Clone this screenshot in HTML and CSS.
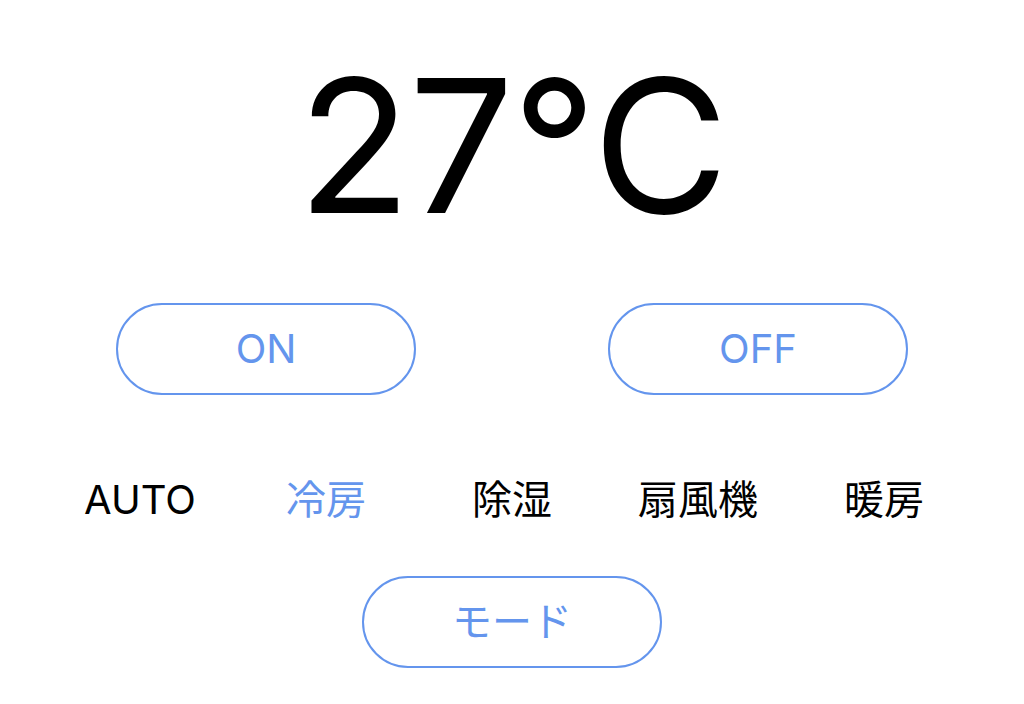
FILE: index.html
```html
<!DOCTYPE html>
<html lang="ja">
<head>
    <meta charset="UTF-8">
    <meta name="viewport" content="width=device-width, initial-scale=1.0">
    <title>エアコン</title>
    <link rel="stylesheet" href="styles.css">
</head>
<body>
    <div class="remote">
        <div class="temp">27°C</div>

        <div class="power">
            <button class="pill">ON</button>
            <button class="pill">OFF</button>
        </div>

        <div class="modes">
            <div class="mode">AUTO</div>
            <div class="mode active">冷房</div>
            <div class="mode">除湿</div>
            <div class="mode">扇風機</div>
            <div class="mode">暖房</div>
        </div>

        <button class="pill">モード</button>
    </div>
</body>
</html>
```

FILE: styles.css
```css
body {
    margin: 0;
    background-color: #fff;
    font-family: Inter, "Noto Sans CJK JP", sans-serif;
    color: #000;
}
.remote {
    display: flex;
    flex-direction: column;
    align-items: center;
    padding-top: 53px;
}
.temp {
    font-size: 186px;
    line-height: 1;
    height: 186px;
    letter-spacing: -2px;
}
.power {
    display: flex;
    gap: 192px;
    margin-top: 64px;
}
.pill {
    box-sizing: border-box;
    width: 300px;
    height: 92px;
    border: 2px solid #6495ed;
    border-radius: 46px;
    background-color: #fff;
    color: #6495ed;
    font-family: Inter, "Noto Sans CJK JP", sans-serif;
    font-size: 40px;
    line-height: 40px;
    padding: 0;
}
.modes {
    display: grid;
    grid-template-columns: repeat(5, 186px);
    margin-top: 85px;
    margin-bottom: 56px;
}
.mode {
    text-align: center;
    font-size: 40px;
    line-height: 40px;
}
.mode.active {
    color: #6495ed;
}
```
